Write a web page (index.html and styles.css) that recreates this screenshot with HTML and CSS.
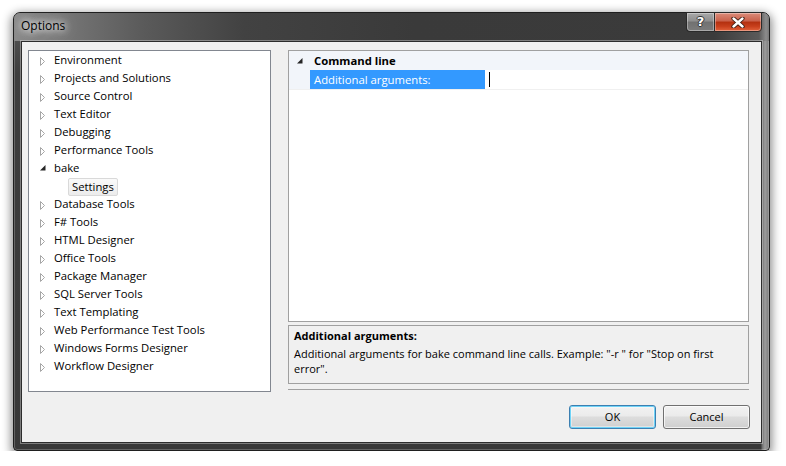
FILE: index.html
```html
<!DOCTYPE html>
<html>
<head>
<meta charset="utf-8">
<title>Options</title>
<link rel="stylesheet" href="styles.css">
</head>
<body>
<div class="window">
  <div class="titlebar">
    <div class="title">Options</div>
    <div class="caption-buttons">
      <div class="cap-btn help">?</div>
      <div class="cap-btn close">
        <svg width="14" height="11" viewBox="0 0 14 11">
          <path d="M2.5 1.5 L11.5 9.5 M11.5 1.5 L2.5 9.5" stroke="#3a1a10" stroke-width="4.2" stroke-linecap="round"/>
          <path d="M2.5 1.5 L11.5 9.5 M11.5 1.5 L2.5 9.5" stroke="#ffffff" stroke-width="2.4" stroke-linecap="round"/>
        </svg>
      </div>
    </div>
  </div>
  <div class="client">
    <div class="main">
      <div class="tree">
        <div class="node"><span class="arrow"><svg width="6" height="9" viewBox="0 0 6 9"><path d="M0.5 0.5 L4.5 4.5 L0.5 8.5 Z" fill="#fff" stroke="#a6a6a6"/></svg></span>Environment</div>
        <div class="node"><span class="arrow"><svg width="6" height="9" viewBox="0 0 6 9"><path d="M0.5 0.5 L4.5 4.5 L0.5 8.5 Z" fill="#fff" stroke="#a6a6a6"/></svg></span>Projects and Solutions</div>
        <div class="node"><span class="arrow"><svg width="6" height="9" viewBox="0 0 6 9"><path d="M0.5 0.5 L4.5 4.5 L0.5 8.5 Z" fill="#fff" stroke="#a6a6a6"/></svg></span>Source Control</div>
        <div class="node"><span class="arrow"><svg width="6" height="9" viewBox="0 0 6 9"><path d="M0.5 0.5 L4.5 4.5 L0.5 8.5 Z" fill="#fff" stroke="#a6a6a6"/></svg></span>Text Editor</div>
        <div class="node"><span class="arrow"><svg width="6" height="9" viewBox="0 0 6 9"><path d="M0.5 0.5 L4.5 4.5 L0.5 8.5 Z" fill="#fff" stroke="#a6a6a6"/></svg></span>Debugging</div>
        <div class="node"><span class="arrow"><svg width="6" height="9" viewBox="0 0 6 9"><path d="M0.5 0.5 L4.5 4.5 L0.5 8.5 Z" fill="#fff" stroke="#a6a6a6"/></svg></span>Performance Tools</div>
        <div class="node"><span class="arrow open"><svg width="6" height="6" viewBox="0 0 6 6"><path d="M5.5 0 L5.5 5.5 L0 5.5 Z" fill="#262626"/></svg></span>bake</div>
        <div class="node child"><span class="selected-item">Settings</span></div>
        <div class="node"><span class="arrow"><svg width="6" height="9" viewBox="0 0 6 9"><path d="M0.5 0.5 L4.5 4.5 L0.5 8.5 Z" fill="#fff" stroke="#a6a6a6"/></svg></span>Database Tools</div>
        <div class="node"><span class="arrow"><svg width="6" height="9" viewBox="0 0 6 9"><path d="M0.5 0.5 L4.5 4.5 L0.5 8.5 Z" fill="#fff" stroke="#a6a6a6"/></svg></span>F# Tools</div>
        <div class="node"><span class="arrow"><svg width="6" height="9" viewBox="0 0 6 9"><path d="M0.5 0.5 L4.5 4.5 L0.5 8.5 Z" fill="#fff" stroke="#a6a6a6"/></svg></span>HTML Designer</div>
        <div class="node"><span class="arrow"><svg width="6" height="9" viewBox="0 0 6 9"><path d="M0.5 0.5 L4.5 4.5 L0.5 8.5 Z" fill="#fff" stroke="#a6a6a6"/></svg></span>Office Tools</div>
        <div class="node"><span class="arrow"><svg width="6" height="9" viewBox="0 0 6 9"><path d="M0.5 0.5 L4.5 4.5 L0.5 8.5 Z" fill="#fff" stroke="#a6a6a6"/></svg></span>Package Manager</div>
        <div class="node"><span class="arrow"><svg width="6" height="9" viewBox="0 0 6 9"><path d="M0.5 0.5 L4.5 4.5 L0.5 8.5 Z" fill="#fff" stroke="#a6a6a6"/></svg></span>SQL Server Tools</div>
        <div class="node"><span class="arrow"><svg width="6" height="9" viewBox="0 0 6 9"><path d="M0.5 0.5 L4.5 4.5 L0.5 8.5 Z" fill="#fff" stroke="#a6a6a6"/></svg></span>Text Templating</div>
        <div class="node"><span class="arrow"><svg width="6" height="9" viewBox="0 0 6 9"><path d="M0.5 0.5 L4.5 4.5 L0.5 8.5 Z" fill="#fff" stroke="#a6a6a6"/></svg></span>Web Performance Test Tools</div>
        <div class="node"><span class="arrow"><svg width="6" height="9" viewBox="0 0 6 9"><path d="M0.5 0.5 L4.5 4.5 L0.5 8.5 Z" fill="#fff" stroke="#a6a6a6"/></svg></span>Windows Forms Designer</div>
        <div class="node"><span class="arrow"><svg width="6" height="9" viewBox="0 0 6 9"><path d="M0.5 0.5 L4.5 4.5 L0.5 8.5 Z" fill="#fff" stroke="#a6a6a6"/></svg></span>Workflow Designer</div>
      </div>
      <div class="right">
        <div class="propgrid">
          <div class="category">
            <span class="cat-arrow"><svg width="6" height="6" viewBox="0 0 6 6"><path d="M5.5 0 L5.5 5.5 L0 5.5 Z" fill="#262626"/></svg></span>
            <span class="cat-name">Command line</span>
          </div>
          <div class="prop">
            <div class="gutter"></div>
            <div class="prop-name">Additional arguments:</div>
            <div class="prop-value"><span class="caret"></span></div>
          </div>
        </div>
        <div class="description">
          <div class="desc-title">Additional arguments:</div>
          <div class="desc-text">Additional arguments for bake command line calls. Example: "-r " for "Stop on first<br>error".</div>
        </div>
        <div class="separator"></div>
      </div>
    </div>
    <div class="buttons">
      <div class="btn default">OK</div>
      <div class="btn">Cancel</div>
    </div>
  </div>
</div>
</body>
</html>
```
FILE: styles.css
```css
* { box-sizing: border-box; }

html, body {
  margin: 0;
  padding: 0;
  background: #ffffff;
}

body {
  padding: 12px 0 0 13px;
  font-family: "Open Sans", "Noto Sans", sans-serif;
  font-size: 11px;
  color: #000;
}

.window {
  width: 757px;
  height: 439px;
  border: 1px solid #1f1f1f;
  border-radius: 7px 7px 4px 4px;
  background:
    linear-gradient(to right, rgba(0,0,0,0) 0, rgba(0,0,0,0) 747px, #6c6c6c 748px, #9c9c9c 751px, #7a7a7a 755px),
    linear-gradient(to bottom, #5c5c5c 0, #3e3e3e 60px, #383838 100%);
  box-shadow: 0 3px 10px 2px rgba(0,0,0,0.45), inset 0 0 0 1px rgba(255,255,255,0.22);
  display: flex;
  flex-direction: column;
}

.titlebar {
  height: 28px;
  display: flex;
  align-items: flex-start;
  border-radius: 6px 6px 0 0;
  background: linear-gradient(to right, #8a8a8a 0, #767676 50px, #5a5a5a 130px, #424242 230px, #3a3a3a 400px, #3b3b3b 700px, #5a5a5a 745px, #8c8c8c 752px, #6a6a6a 757px);
}

.title {
  padding: 5px 0 0 7px;
  line-height: 16px;
  font-size: 12px;
  color: #000;
  text-shadow: 0 0 6px #fff, 0 0 10px rgba(255,255,255,0.9), 0 0 16px rgba(255,255,255,0.7);
  flex: 1;
}

.caption-buttons {
  display: flex;
  margin-top: -1px;
  margin-right: 7px;
}

.cap-btn {
  height: 20px;
  border: 1px solid #2a2a2a;
  display: flex;
  align-items: center;
  justify-content: center;
  box-shadow: inset 0 0 0 1px rgba(255,255,255,0.35);
}

.cap-btn.help {
  width: 28px;
  border-radius: 0 0 0 4px;
  border-right: none;
  background: linear-gradient(to bottom, #a9a9a9 0, #8e8e8e 45%, #717171 50%, #7c7c7c 100%);
  color: #fff;
  font-family: "DejaVu Sans", sans-serif;
  font-weight: bold;
  font-size: 13px;
  line-height: 18px;
  text-shadow: 1px 0 0 #333, -1px 0 0 #333, 0 1px 0 #333, 0 -1px 0 #333;
}

.cap-btn.close {
  width: 48px;
  border-radius: 0 0 4px 0;
  background: linear-gradient(to bottom, #dc8c7a 0, #c9604a 45%, #b3300f 50%, #c8401d 75%, #e2633c 100%);
}

.client {
  flex: 1;
  margin: 0 7px 7px 7px;
  background: #f0f0f0;
  border: 1px solid #2c2c2c;
  box-shadow: 0 0 0 1px rgba(255,255,255,0.35);
  padding: 8px 0 0 6px;
  display: flex;
  flex-direction: column;
}

.main {
  display: flex;
  gap: 17px;
  height: 342px;
}

.tree {
  width: 243px;
  height: 342px;
  background: #fff;
  border: 1px solid #828790;
  padding: 0;
  font-size: 11.3px;
}

.node {
  height: 18px;
  display: flex;
  align-items: center;
  padding-left: 11px;
  line-height: 18px;
  white-space: nowrap;
}

.arrow {
  width: 6px;
  margin-right: 8px;
  display: flex;
  margin-top: 3px;
}

.arrow.open {
  margin-top: 0;
}

.node.child {
  padding-left: 39px;
}

.selected-item {
  display: inline-block;
  height: 18px;
  margin-top: 2px;
  line-height: 16px;
  padding: 0 3px;
  border: 1px solid #d9d9d9;
  border-radius: 2px;
  background: linear-gradient(to bottom, #fafafa 0, #ececec 100%);
}

.right {
  width: 461px;
  display: flex;
  flex-direction: column;
}

.propgrid {
  height: 272px;
  background: #fff;
  border: 1px solid #a0a0a0;
  font-size: 11.3px;
}

.category {
  height: 19px;
  background: #f2f5fa;
  display: flex;
  align-items: center;
  padding-left: 8px;
}

.cat-arrow {
  display: flex;
  width: 6px;
  margin-right: 11px;
  margin-top: 1px;
}

.cat-name {
  font-weight: bold;
  line-height: 19px;
}

.prop {
  height: 20px;
  display: flex;
  border-bottom: 1px solid #f0f0f0;
}

.gutter {
  width: 21px;
  background: #f2f5fa;
}

.prop-name {
  width: 175px;
  background: #3399ff;
  color: #fff;
  padding-left: 4px;
  line-height: 19px;
  white-space: nowrap;
}

.prop-value {
  flex: 1;
  padding-left: 4px;
  display: flex;
  align-items: center;
}

.caret {
  display: block;
  width: 1px;
  height: 15px;
  background: #000;
}

.description {
  margin-top: 3px;
  height: 59px;
  border: 1px solid #a0a0a0;
  background: #f0f0f0;
  padding: 2px 0 0 5px;
}

.desc-title {
  font-weight: bold;
  line-height: 16px;
}

.desc-text {
  margin-top: 2px;
  line-height: 15px;
  white-space: nowrap;
}

.separator {
  margin-top: 5px;
  height: 1px;
  background: #a0a0a0;
}

.buttons {
  display: flex;
  justify-content: flex-end;
  gap: 7px;
  margin-top: 13px;
  padding-right: 11px;
}

.btn {
  width: 87px;
  height: 24px;
  border: 1px solid #707070;
  border-radius: 3px;
  background: linear-gradient(to bottom, #f2f2f2 0, #ebebeb 45%, #dddddd 50%, #cfcfcf 100%);
  box-shadow: inset 0 0 0 1px rgba(255,255,255,0.7);
  display: flex;
  align-items: center;
  justify-content: center;
  line-height: 22px;
}

.btn.default {
  border-color: #3c7fb1;
  box-shadow: inset 0 0 0 1px #6fd3f7, inset 0 0 0 2px rgba(255,255,255,0.4);
}
```
